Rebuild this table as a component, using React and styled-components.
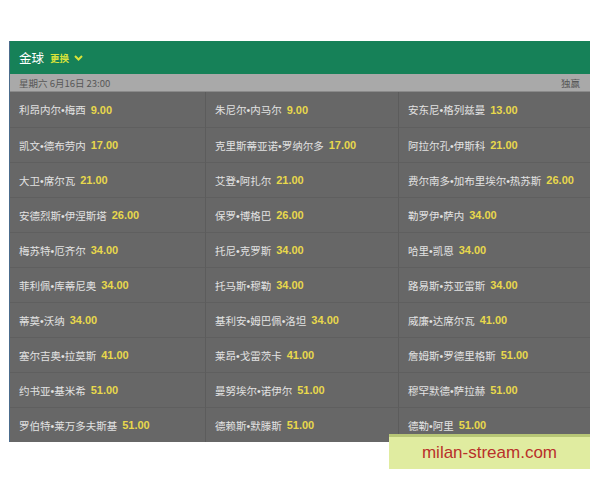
import React from "react"
import styled, { createGlobalStyle } from "styled-components"

const GlobalStyle = createGlobalStyle`
  html, body {
    margin: 0;
    padding: 0;
    background: #fff;
  }
  body {
    font-family: "Liberation Sans", "Noto Sans CJK SC", sans-serif;
  }
`

const Page = styled.div`
  position: relative;
  width: 600px;
  height: 480px;
  padding: 41px 10px 0 9px;
  box-sizing: border-box;
`

const Panel = styled.div`
  border-left: 1px solid #4c6c8c;
`

const Header = styled.div`
  height: 33px;
  background: #168158;
  display: flex;
  align-items: center;
  padding-left: 9px;
  gap: 6px;
`

const Title = styled.span`
  color: #fff;
  font-family: "Noto Sans CJK SC", sans-serif;
  font-size: 12.5px;
`

const Switch = styled.span`
  display: flex;
  align-items: center;
  gap: 5px;
  color: #d9e33a;
  font-family: "Noto Sans CJK SC", sans-serif;
  font-size: 9.5px;
  font-weight: 700;
`

const DateBar = styled.div`
  height: 17px;
  background: #a9a9a9;
  display: flex;
  align-items: center;
  justify-content: space-between;
  padding: 0 10px 0 9px;
  color: #575757;
  font-family: "Noto Sans CJK SC", sans-serif;
  font-size: 9.5px;
  border-bottom: 1px solid #8a8a8a;
`

const Grid = styled.div`
  display: grid;
  grid-template-columns: 195px 193px 1fr;
  background: #676767;
`

const Cell = styled.div`
  height: 35px;
  display: flex;
  align-items: center;
  gap: 5px;
  padding-left: 9px;
  box-sizing: border-box;
  border-top: ${p => (p.first ? "none" : "1px solid #5f5f5f")};
  border-left: ${p => (p.col > 0 ? "1px solid #5c5c5c" : "none")};
`

const Name = styled.span`
  color: #e2e2e2;
  font-family: "Liberation Sans", "Noto Sans CJK SC", sans-serif;
  font-size: 10.5px;
`

const Odds = styled.span`
  color: #e8d84c;
  font-family: "Liberation Sans", sans-serif;
  font-size: 11px;
  font-weight: 700;
`

const Watermark = styled.div`
  position: absolute;
  left: 389px;
  top: 434px;
  width: 201px;
  height: 35px;
  box-sizing: border-box;
  background: #e0eca0;
  border-top: 3px solid #b7c676;
  display: flex;
  align-items: center;
  justify-content: center;
  color: #b9302a;
  font-family: "Liberation Sans", sans-serif;
  font-size: 17px;
`

const players = [
  ["利昂内尔•梅西", "9.00"],
  ["朱尼尔•内马尔", "9.00"],
  ["安东尼•格列兹曼", "13.00"],
  ["凯文•德布劳内", "17.00"],
  ["克里斯蒂亚诺•罗纳尔多", "17.00"],
  ["阿拉尔孔•伊斯科", "21.00"],
  ["大卫•席尔瓦", "21.00"],
  ["艾登•阿扎尔", "21.00"],
  ["费尔南多•加布里埃尔•热苏斯", "26.00"],
  ["安德烈斯•伊涅斯塔", "26.00"],
  ["保罗•博格巴", "26.00"],
  ["勒罗伊•萨内", "34.00"],
  ["梅苏特•厄齐尔", "34.00"],
  ["托尼•克罗斯", "34.00"],
  ["哈里•凯恩", "34.00"],
  ["菲利佩•库蒂尼奥", "34.00"],
  ["托马斯•穆勒", "34.00"],
  ["路易斯•苏亚雷斯", "34.00"],
  ["蒂莫•沃纳", "34.00"],
  ["基利安•姆巴佩•洛坦", "34.00"],
  ["威廉•达席尔瓦", "41.00"],
  ["塞尔吉奥•拉莫斯", "41.00"],
  ["莱昂•戈雷茨卡", "41.00"],
  ["詹姆斯•罗德里格斯", "51.00"],
  ["约书亚•基米希", "51.00"],
  ["曼努埃尔•诺伊尔", "51.00"],
  ["穆罕默德•萨拉赫", "51.00"],
  ["罗伯特•莱万多夫斯基", "51.00"],
  ["德赖斯•默滕斯", "51.00"],
  ["德勒•阿里", "51.00"],
]

const Chevron = () => (
  <svg width="9" height="6" viewBox="0 0 9 6">
    <path d="M1 1 L4.5 4.5 L8 1" fill="none" stroke="#d9e33a" strokeWidth="2" />
  </svg>
)

const App = () => {
  return (
    <Page>
      <GlobalStyle />
      <Panel>
        <Header>
          <Title>金球</Title>
          <Switch>更换 <Chevron /></Switch>
        </Header>
        <DateBar>
          <span>星期六 6月16日 23:00</span>
          <span>独赢</span>
        </DateBar>
        <Grid>
          {players.map(([name, odds], i) => (
            <Cell key={i} col={i % 3} first={i < 3}>
              <Name>{name}</Name>
              <Odds>{odds}</Odds>
            </Cell>
          ))}
        </Grid>
      </Panel>
      <Watermark>milan-stream.com</Watermark>
    </Page>
  )
}

export default App
